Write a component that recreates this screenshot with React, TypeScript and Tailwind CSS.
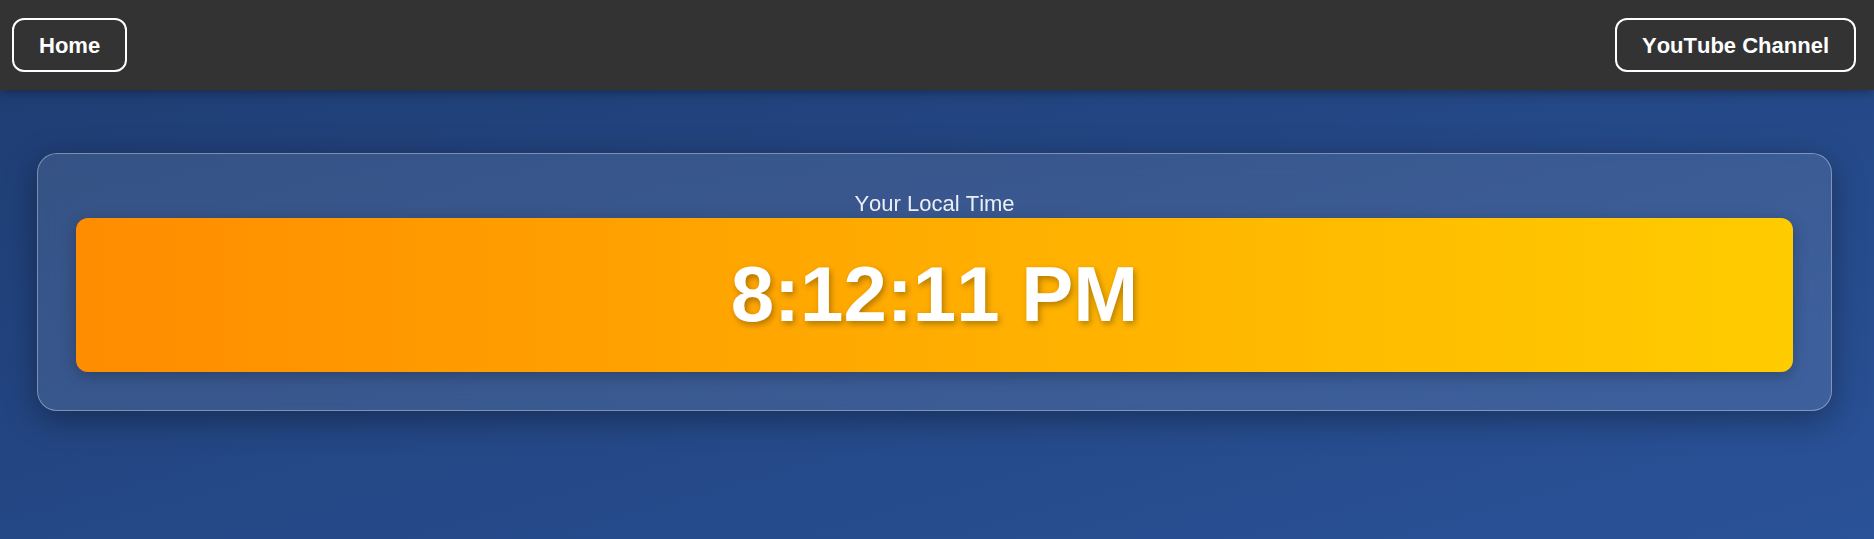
import React from "react";

export default function App() {
  return (
    <div className="min-h-screen w-full bg-gradient-to-br from-[#1e3c72] to-[#2a5298] font-['Liberation_Sans',Arial,sans-serif] text-white [font-kerning:none]">
      {/* NAVBAR */}
      <nav className="h-[90px] bg-[#333333] flex items-center justify-between pl-[12px] pr-[18px] shadow-[0_2px_10px_rgba(0,0,0,0.35)] relative z-10">
        <button className="h-[54px] px-[25px] flex items-center rounded-[12px] border-2 border-white text-[22px] font-bold text-white">
          Home
        </button>
        <button className="h-[54px] px-[25px] flex items-center rounded-[12px] border-2 border-white text-[22px] font-bold text-white">
          YouTube Channel
        </button>
      </nav>

      {/* CLOCK CARD */}
      <main className="pt-[63px] pl-[37px] pr-[42px] pb-[40px]">
        <div className="rounded-[20px] border border-white/35 bg-white/10 backdrop-blur-md shadow-[0_8px_32px_rgba(0,0,0,0.35)] px-[38px] pt-[37px] pb-[38px] text-center">
          <div className="text-[22px] leading-[1.15] text-white/90 mb-[2px]">Your Local Time</div>
          <div className="rounded-[12px] bg-gradient-to-r from-[#ff8c00] to-[#ffcc00] py-[32px] shadow-[0_4px_15px_rgba(0,0,0,0.25)] text-[78px] leading-[1.15] font-bold text-white [text-shadow:2px_3px_6px_rgba(0,0,0,0.3)]">
            8:12:11 PM
          </div>
        </div>
      </main>
    </div>
  );
}
